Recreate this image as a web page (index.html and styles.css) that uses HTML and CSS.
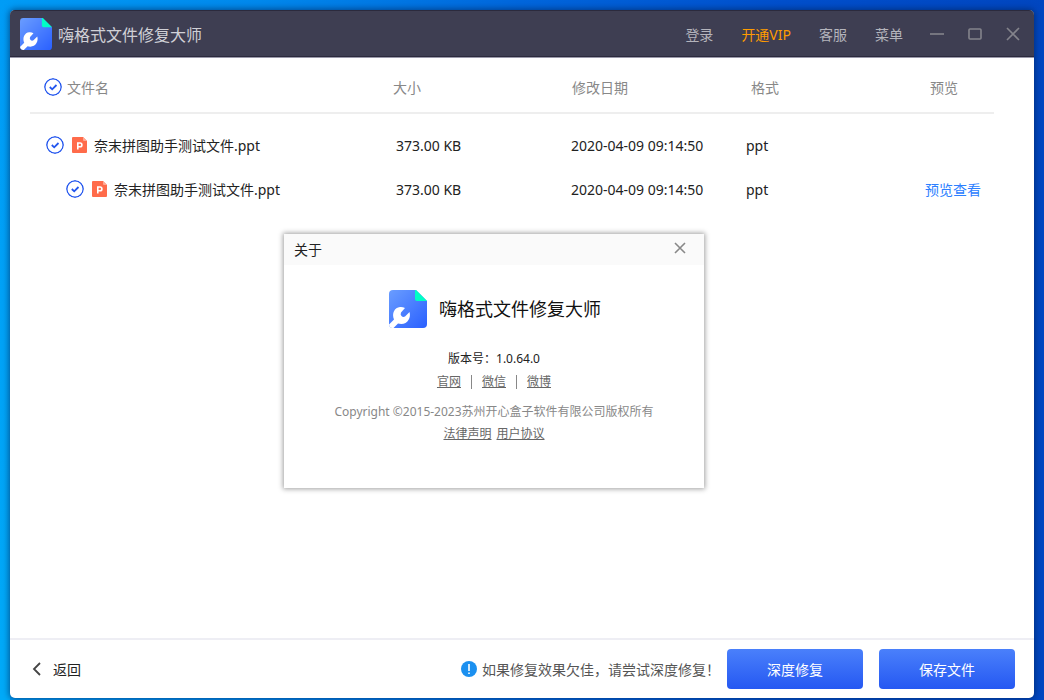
FILE: index.html
```html
<!DOCTYPE html>
<html lang="zh-CN">
<head>
<meta charset="utf-8">
<title>嗨格式文件修复大师</title>
<link rel="stylesheet" href="styles.css">
</head>
<body>
<svg class="defs" aria-hidden="true">
  <defs>
    <linearGradient id="logo-fill" x1="0" y1="0" x2="1" y2="1">
      <stop offset="0" stop-color="#6a9dff"/>
      <stop offset="1" stop-color="#2a60ff"/>
    </linearGradient>
    <symbol id="logo" viewBox="0 0 38 38">
      <path fill="url(#logo-fill)" d="M4 0H27L38 11V34a4 4 0 0 1-4 4H4a4 4 0 0 1-4-4V4a4 4 0 0 1 4-4z"/>
      <path fill="#00ffc6" d="M27 0L38 11H28a2 2 0 0 1-2-2V0z"/>
      <path fill="#fff" d="M0 34.5L5 29.5C2.500 23.500 5.500 17.500 11 17Q13.500 16.700 16 18L12 22.500Q11 24.500 12.500 26Q14 27.500 16 26.500L20.500 22C22.500 28.500 17.500 36 9 33.500L4.500 38H3.500A4 4 0 0 1 0 34.500z"/>
    </symbol>
    <symbol id="ppt" viewBox="0 0 15 16">
      <path fill="#ff6b4a" d="M1 0H11L15 4V15a1 1 0 0 1-1 1H1a1 1 0 0 1-1-1V1a1 1 0 0 1 1-1z"/>
      <path fill="#ffa994" d="M11 0L15 4H12a1 1 0 0 1-1-1z"/>
      <path fill="none" stroke="#fff" stroke-width="1.6" d="M5.800 12.500V6H8a1.900 1.900 0 0 1 0 3.800H5.800"/>
    </symbol>
  </defs>
</svg>
<div class="window">
  <header class="titlebar">
    <svg class="titlebar-logo" aria-hidden="true"><use href="#logo"/></svg>
    <h1 class="titlebar-name">嗨格式文件修复大师</h1>
    <nav class="menu">
      <a class="menu-link" href="#login">登录</a>
      <a class="menu-link menu-vip" href="#vip">开通VIP</a>
      <a class="menu-link" href="#service">客服</a>
      <a class="menu-link" href="#menu">菜单</a>
    </nav>
    <div class="controls">
      <button class="control" type="button" aria-label="最小化"><svg viewBox="0 0 14 14"><path d="M0 7H14"/></svg></button>
      <button class="control" type="button" aria-label="最大化"><svg viewBox="0 0 14 14"><rect x="1" y="2" width="12" height="10" rx="1"/></svg></button>
      <button class="control" type="button" aria-label="关闭"><svg viewBox="0 0 14 14"><path d="M1 1L13 13M13 1L1 13"/></svg></button>
    </div>
  </header>

  <main class="content">
    <table class="files">
      <colgroup><col><col class="col-size"><col class="col-date"><col class="col-format"><col class="col-preview"></colgroup>
      <thead>
        <tr>
          <th><label class="name name-all"><input class="check" type="checkbox" checked><span class="label">文件名</span></label></th>
          <th><span class="label">大小</span></th><th><span class="label">修改日期</span></th><th><span class="label">格式</span></th><th><span class="label">预览</span></th>
        </tr>
      </thead>
      <tbody>
        <tr>
          <td><label class="name"><input class="check" type="checkbox" checked><svg class="file-icon" aria-hidden="true"><use href="#ppt"/></svg><span class="label">奈末拼图助手测试文件.ppt</span></label></td>
          <td><span class="label">373.00 KB</span></td><td><span class="label">2020-04-09 09:14:50</span></td><td><span class="label">ppt</span></td><td></td>
        </tr>
        <tr>
          <td><label class="name name-child"><input class="check" type="checkbox" checked><svg class="file-icon" aria-hidden="true"><use href="#ppt"/></svg><span class="label">奈末拼图助手测试文件.ppt</span></label></td>
          <td><span class="label">373.00 KB</span></td><td><span class="label">2020-04-09 09:14:50</span></td><td><span class="label">ppt</span></td><td><a class="label preview" href="#preview">预览查看</a></td>
        </tr>
      </tbody>
    </table>
  </main>

  <footer class="footer">
    <button class="back" type="button"><svg viewBox="0 0 9 14" aria-hidden="true"><path d="M8 1L2 7L8 13"/></svg><span class="label">返回</span></button>
    <p class="hint"><svg viewBox="0 0 16 16" aria-hidden="true"><circle cx="8" cy="8" r="8" fill="#1b90f0"/><path stroke="#fff" stroke-width="1.600" d="M8 3V10M8 11.400V13"/></svg><span class="label">如果修复效果欠佳，请尝试深度修复！</span></p>
    <button class="action" type="button">深度修复</button>
    <button class="action" type="button">保存文件</button>
  </footer>

  <section class="dialog" role="dialog" aria-labelledby="about-title">
    <header class="dialog-bar">
      <h2 class="dialog-title" id="about-title">关于</h2>
      <button class="dialog-close" type="button" aria-label="关闭"><svg viewBox="0 0 12 12"><path d="M1 1L11 11M11 1L1 11"/></svg></button>
    </header>
    <div class="dialog-body">
      <div class="brand"><svg class="brand-logo" aria-hidden="true"><use href="#logo"/></svg><span class="brand-name">嗨格式文件修复大师</span></div>
      <p class="version">版本号：1.0.64.0</p>
      <div class="links"><a href="#site">官网</a><span class="rule"></span><a href="#wechat">微信</a><span class="rule"></span><a href="#weibo">微博</a></div>
      <p class="copyright">Copyright ©2015-2023苏州开心盒子软件有限公司版权所有</p>
      <div class="legal"><a href="#law">法律声明</a><a href="#terms">用户协议</a></div>
    </div>
  </section>
</div>
</body>
</html>
```
FILE: styles.css
```css
* { box-sizing: border-box; }

body {
  margin: 0;
  padding: 10px 10px 2px;
  height: 100vh;
  background:
    linear-gradient(#00aaf800, #00aaf8) left / 10px 100% no-repeat,
    linear-gradient(to right, #009cf6 0, #0088ec 25%, #0066dc 50%, #004fcc 75%, #0046c0);
  font: 14px/20px "Noto Sans", "Noto Sans CJK SC", sans-serif;
  color: #222;
}

h1, h2, p { margin: 0; font-weight: 400; }
button { padding: 0; border: 0; background: none; font: inherit; color: inherit; cursor: pointer; }
svg { display: block; flex: none; }
.defs { position: absolute; width: 0; height: 0; }
.label { display: block; padding-top: 2px; }

.window {
  position: relative;
  display: flex;
  flex-direction: column;
  height: 100%;
  background: #fff;
  border-radius: 5px;
  box-shadow: 0 0 6px 1px #00205099;
}

.titlebar {
  display: flex;
  align-items: center;
  height: 48px;
  padding: 0 14px 0 10px;
  background: #3e3e52;
  border: 1px solid #2b2a3d;
  border-width: 1px 0;
  border-bottom-color: #9a99aa;
  box-shadow: inset 0 -1px #2b2a3d;
  border-radius: 5px 5px 0 0;
  color: #b4b4bc;
}
.titlebar-logo { width: 32px; height: 32px; }
.titlebar-name { flex: 1; margin-left: 6px; padding-top: 2px; font-size: 16px; line-height: 24px; color: #d0d0d6; }
.menu { display: flex; gap: 28px; padding-top: 2px; }
.menu-link { color: inherit; text-decoration: none; }
.menu-vip { color: #ff9c00; }
.controls { display: flex; gap: 24px; margin-left: 27px; }
.control svg { width: 14px; height: 14px; fill: none; stroke: #84848c; stroke-width: 1.6; }

.content { flex: 1; padding: 0 40px 0 20px; }

.files { width: 100%; table-layout: fixed; border-collapse: separate; border-spacing: 0; }
.col-size { width: 176px; }
.col-date { width: 178px; }
.col-format { width: 178px; }
.col-preview { width: 72px; }
.files th {
  height: 56px;
  padding: 4px 0 0;
  border-bottom: 2px solid #eeeeee;
  font-weight: 400;
  text-align: left;
  color: #888;
}
.files td { height: 44px; padding: 0; white-space: nowrap; }
.files tbody::before { content: ""; display: block; height: 9px; }
.files th:nth-child(2) { padding-left: 3px; }
.files td:nth-child(2) { padding-left: 6px; }
.files th:nth-child(3) { padding-left: 6px; }
.files td:nth-child(3) { padding-left: 5px; }
.files th:nth-child(4) { padding-left: 7px; }
.files td:nth-child(4) { padding-left: 2px; }
.files th:nth-child(5) { padding-left: 8px; }
.files td:nth-child(5) { padding-left: 3px; }

.name { display: flex; align-items: center; padding-left: 16px; }
.name-all { gap: 5px; padding-left: 14px; }
.name-child { padding-left: 36px; }
.check {
  appearance: none;
  flex: none;
  width: 18px;
  height: 18px;
  margin: 0;
  border-radius: 50%;
  border: 1px solid #2b5cf0;
}
.check:checked {
  border: 0;
  background: url("data:image/svg+xml,%3Csvg xmlns='http://www.w3.org/2000/svg' viewBox='0 0 18 18' fill='none' stroke='%232356ee'%3E%3Ccircle cx='9' cy='9' r='8.2' stroke-width='1.4'/%3E%3Cpath d='M5.8 9L8.2 11.3L12.5 7' stroke-width='1.8'/%3E%3C/svg%3E");
}
.file-icon { width: 15px; height: 16px; margin: 0 7px 0 8px; }
.preview { color: #2c80ff; text-decoration: none; }

.footer {
  display: flex;
  align-items: center;
  height: 60px;
  padding: 0 19px 0 22px;
  border-top: 2px solid #eeeef4;
}
.back { display: flex; align-items: center; gap: 12px; margin-right: auto; }
.back svg { width: 9px; height: 14px; fill: none; stroke: #444; stroke-width: 1.8; }
.hint { display: flex; align-items: center; gap: 5px; margin-right: 7px; color: #555; }
.hint svg { width: 16px; height: 16px; }
.action {
  width: 136px;
  height: 40px;
  padding-top: 2px;
  border-radius: 4px;
  background: linear-gradient(#4a80fb, #2558f2);
  color: #fff;
}
.action + .action { margin-left: 16px; }

.dialog {
  position: absolute;
  left: 274px;
  top: 224px;
  width: 420px;
  padding-bottom: 44px;
  background: #fff;
  box-shadow: 0 0 5px 1px #00000060;
}
.dialog-bar {
  display: flex;
  align-items: center;
  justify-content: space-between;
  height: 31px;
  padding: 0 18px 0 10px;
  background: #fafafa;
}
.dialog-title { font-size: 14px; line-height: 20px; }
.dialog-close { padding-bottom: 3px; }
.dialog-close svg { width: 12px; height: 12px; fill: none; stroke: #888; stroke-width: 1.6; }
.dialog-body { display: flex; flex-direction: column; align-items: center; padding-top: 25px; font-size: 12px; }
.brand { display: flex; align-items: center; gap: 12px; margin-bottom: 21px; padding-left: 2px; color: #111; }
.brand-logo { width: 38px; height: 38px; }
.brand-name { font-size: 18px; line-height: 28px; }
.links { display: flex; align-items: center; margin: 3px 0 10px; }
.links a, .legal a { color: #666; }
.rule { width: 1px; height: 14px; margin: 0 10px; background: #888; }
.copyright { color: #888; }
.legal { display: flex; gap: 5px; margin-top: 2px; }
```
